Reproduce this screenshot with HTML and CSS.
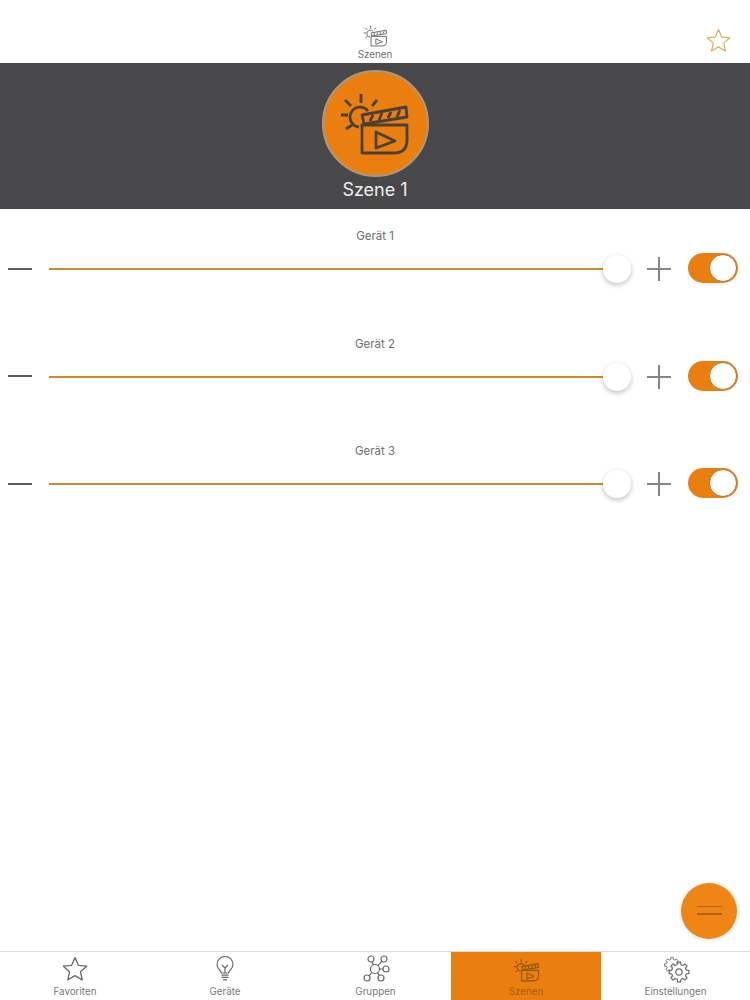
FILE: index.html
```html
<!DOCTYPE html>
<html lang="de">
<head>
  <meta charset="UTF-8">
  <meta name="viewport" content="width=device-width, initial-scale=1.0">
  <title>Szenen</title>
  <link rel="stylesheet" href="styles.css">
</head>
<body>
  <svg class="defs" width="0" height="0">
    <defs>
      <symbol id="clapper" viewBox="0 0 72 64">
        <path d="M29 19A10 10 0 1 0 20 35M22 2V11M2 23H9M6 8L12 14M38 8L33 14M7 37L13 33" />
        <path d="M23 23L67 15L68 25L25 32Z" />
        <path class="stripes" d="M31 29L34 23M40 28L43 21M49 26L52 20M58 25L61 18" />
        <path d="M23 33H68V48Q68 61 55 61H23Z" />
        <path d="M37 40L56 49L37 56Z" />
      </symbol>
      <symbol id="star" viewBox="0 0 24 24">
        <path d="M12 1.5L15.1 8.6L22.8 9.4L17 14.5L18.7 22L12 18.1L5.3 22L7 14.5L1.2 9.4L8.9 8.6Z" />
      </symbol>
      <path id="gear-seg" d="M-1.81 -7.28L-1.56 -9.88H1.56L1.81 -7.28A7.5 7.5 0 0 1 3.86 -6.43" />
      <g id="gear">
        <use href="#gear-seg" />
        <use href="#gear-seg" transform="rotate(45)" />
        <use href="#gear-seg" transform="rotate(90)" />
        <use href="#gear-seg" transform="rotate(135)" />
        <use href="#gear-seg" transform="rotate(180)" />
        <use href="#gear-seg" transform="rotate(225)" />
        <use href="#gear-seg" transform="rotate(270)" />
        <use href="#gear-seg" transform="rotate(315)" />
      </g>
    </defs>
  </svg>

  <div class="page">
    <header class="topbar">
      <div></div>
      <div class="topbar-title">
        <svg class="icon icon-clapper-sm"><use href="#clapper" /></svg>
        <span>Szenen</span>
      </div>
      <div class="topbar-right">
        <svg class="icon icon-fav"><use href="#star" /></svg>
      </div>
    </header>

    <section class="hero">
      <div class="hero-circle">
        <svg class="icon icon-clapper-lg"><use href="#clapper" /></svg>
      </div>
      <div class="hero-title">Szene 1</div>
    </section>

    <main class="devices">
      <div class="device">
        <div class="device-name">Gerät 1</div>
        <div class="controls">
          <span class="minus"></span>
          <div class="slider"><span class="track"></span><span class="thumb"></span></div>
          <span class="plus"></span>
          <span class="toggle"><span class="knob"></span></span>
        </div>
      </div>
      <div class="device">
        <div class="device-name">Gerät 2</div>
        <div class="controls">
          <span class="minus"></span>
          <div class="slider"><span class="track"></span><span class="thumb"></span></div>
          <span class="plus"></span>
          <span class="toggle"><span class="knob"></span></span>
        </div>
      </div>
      <div class="device">
        <div class="device-name">Gerät 3</div>
        <div class="controls">
          <span class="minus"></span>
          <div class="slider"><span class="track"></span><span class="thumb"></span></div>
          <span class="plus"></span>
          <span class="toggle"><span class="knob"></span></span>
        </div>
      </div>
    </main>

    <button class="fab"><span></span><span></span></button>

    <nav class="tabbar">
      <div class="tab">
        <svg class="icon tab-star"><use href="#star" /></svg>
        <span>Favoriten</span>
      </div>
      <div class="tab">
        <svg class="icon tab-bulb" viewBox="0 0 18 26">
          <path d="M5.5 17C4 13.5 1 12.5 1 8.5A8 8 0 0 1 17 8.5C17 12.5 14 13.5 12.5 17Z" />
          <path d="M6 9L9 12L12 9M9 12V17M5.5 19.2H12.5M5.5 21.4H12.5M7 23.8H11" />
        </svg>
        <span>Geräte</span>
      </div>
      <div class="tab">
        <svg class="icon tab-groups" viewBox="0 0 28 28">
          <circle cx="13" cy="14" r="4.5" />
          <circle cx="9" cy="4" r="3" />
          <circle cx="22" cy="4" r="3" />
          <circle cx="24" cy="14" r="3" />
          <circle cx="5" cy="23" r="3" />
          <circle cx="19" cy="23" r="3" />
          <path d="M10.1 6.8L11.4 9.8M20 6.2L15.9 10.6M21 14H17.5M7 20.8L9.9 17.3M17.5 20.4L15.4 17.8" />
        </svg>
        <span>Gruppen</span>
      </div>
      <div class="tab tab-active">
        <svg class="icon tab-clapper"><use href="#clapper" /></svg>
        <span>Szenen</span>
      </div>
      <div class="tab">
        <svg class="icon tab-gear" viewBox="0 0 28 28">
          <use href="#gear" transform="translate(10 10) scale(.75)" />
          <circle class="mask" cx="17" cy="17" r="8.5" />
          <use href="#gear" transform="translate(17 17)" />
          <circle cx="17" cy="17" r="3.2" />
        </svg>
        <span>Einstellungen</span>
      </div>
    </nav>
  </div>
</body>
</html>
```

FILE: styles.css
```css
* {
  box-sizing: border-box;
}
body {
  margin: 0;
  font-family: Inter, "Liberation Sans", Arial, sans-serif;
  background-color: #ffffff;
  color: #666666;
}
.defs {
  position: absolute;
}
.page {
  position: relative;
  height: 1000px;
  display: flex;
  flex-direction: column;
}
.icon {
  display: block;
  fill: none;
  stroke: #6a6a6c;
  stroke-width: 1.2;
  stroke-linejoin: round;
}

/* top */
.topbar {
  height: 63px;
  display: grid;
  grid-template-columns: 1fr auto 1fr;
  padding-top: 25px;
}
.topbar-title {
  display: flex;
  flex-direction: column;
  align-items: center;
  font-size: 9.8px;
  color: #6e6e70;
}
.topbar-title span {
  margin-top: 2px;
  line-height: 12px;
}
.icon-clapper-sm {
  width: 25px;
  height: 22px;
  stroke-width: 2.8;
}
.topbar-right {
  display: flex;
  justify-content: flex-end;
  padding: 3px 19px 0 0;
}
.icon-fav {
  width: 25px;
  height: 25px;
  stroke: #d8b25a;
}

/* band */
.hero {
  height: 146px;
  background-color: #48484a;
  padding-top: 7px;
  display: flex;
  flex-direction: column;
  align-items: center;
}
.hero-circle {
  width: 107px;
  height: 107px;
  border-radius: 50%;
  background-color: #ea7f0f;
  border: 2px solid #a89a88;
  display: flex;
  align-items: center;
  justify-content: center;
}
.icon-clapper-lg {
  width: 72px;
  height: 64px;
  stroke: #4a4038;
  stroke-width: 2.8;
}
.hero-title {
  margin-top: 2px;
  font-size: 18px;
  line-height: 22px;
  color: #eeeeee;
}

/* rows */
.devices {
  flex: 1;
}
.device {
  height: 107.5px;
  padding-top: 20px;
}
.device-name {
  height: 14px;
  line-height: 14px;
  font-size: 11.5px;
  text-align: center;
  color: #6e6e70;
}
.controls {
  margin-top: 10px;
  height: 32px;
  padding: 0 12px 0 8px;
  display: flex;
  align-items: center;
}
.minus {
  width: 24px;
  height: 2px;
  margin: 0 17px 1px 0;
  background-color: #5c5c60;
}
.slider {
  flex: 1;
  display: flex;
  align-items: center;
}
.track {
  flex: 1;
  height: 2px;
  background-color: #c98c2a;
}
.thumb {
  width: 28px;
  height: 28px;
  border-radius: 50%;
  background-color: #ffffff;
  box-shadow: 0 2px 5px rgba(0, 0, 0, 0.25);
}
.plus {
  width: 24px;
  height: 24px;
  margin: 0 17px 0 16px;
  background:
    linear-gradient(#85858a, #85858a) center / 100% 2px no-repeat,
    linear-gradient(#85858a, #85858a) center / 2px 100% no-repeat;
}
.toggle {
  width: 50px;
  height: 30px;
  margin-bottom: 2px;
  border-radius: 15px;
  background-color: #ea7f0f;
  padding: 1px;
  display: flex;
  justify-content: flex-end;
}
.knob {
  width: 28px;
  height: 28px;
  border-radius: 50%;
  background-color: #ffffff;
  border: 1px solid #a8763c;
}

/* round button */
.fab {
  position: absolute;
  left: 681px;
  top: 883px;
  width: 56px;
  height: 56px;
  border: none;
  border-radius: 50%;
  background-color: #ee8514;
  box-shadow: 0 1px 4px rgba(0, 0, 0, 0.15);
  padding: 0 0 2px;
  display: flex;
  flex-direction: column;
  align-items: center;
  justify-content: center;
  gap: 6px;
}
.fab span {
  width: 25px;
  height: 1.5px;
  background-color: #ad6415;
}

/* bottom */
.tabbar {
  height: 49px;
  border-top: 1px solid #dddddd;
  display: grid;
  grid-template-columns: 150px 150px 151px 150px 149px;
}
.tab {
  position: relative;
  display: flex;
  flex-direction: column;
  align-items: center;
  font-size: 9.8px;
  color: #78787a;
}
.tab span {
  position: absolute;
  top: 34px;
}
.tab-active {
  background-color: #ea7f0f;
  color: #a85c12;
}
.tab-star {
  width: 26px;
  height: 26px;
  margin-top: 4px;
}
.tab-bulb {
  width: 18px;
  height: 26px;
  margin-top: 4px;
}
.tab-groups {
  width: 28px;
  height: 28px;
  margin-top: 3px;
}
.tab-clapper {
  width: 27px;
  height: 24px;
  margin-top: 6px;
  stroke: #8a5416;
  stroke-width: 2.8;
}
.tab-gear {
  width: 28px;
  height: 28px;
  margin-top: 3px;
}
.mask {
  fill: #ffffff;
  stroke: none;
}
```
